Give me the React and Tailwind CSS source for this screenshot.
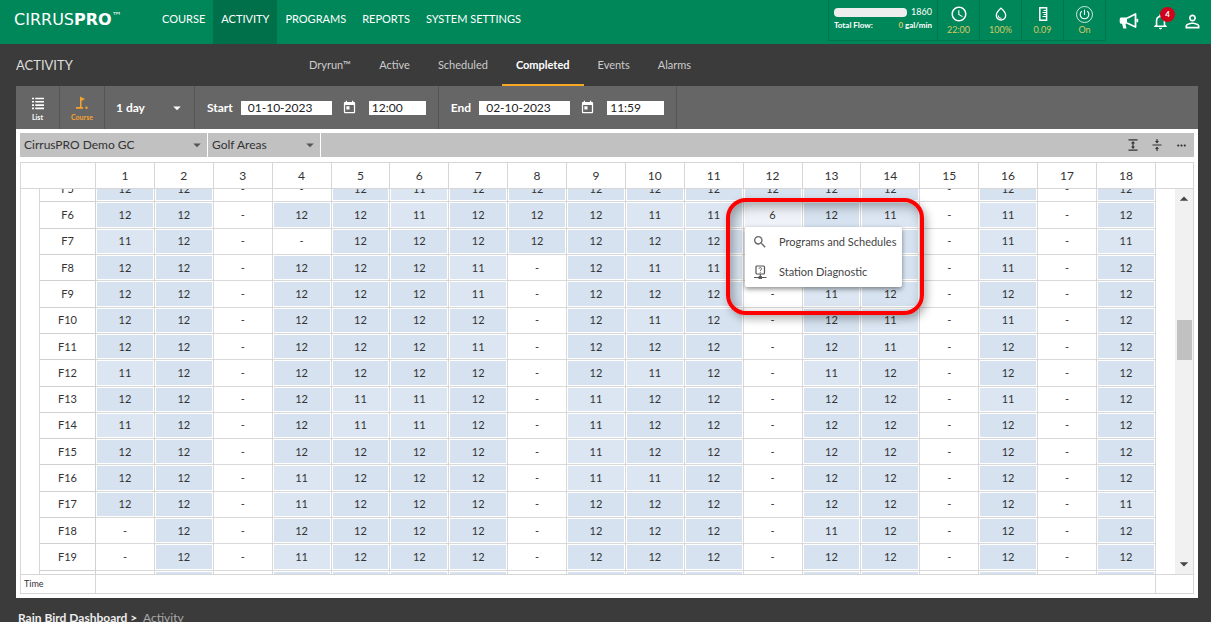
import React, { useState } from 'react';
import {
  MdArrowDropDown,
  MdArrowDropUp,
  MdToday,
  MdAccessTime,
  MdOutlineWaterDrop,
  MdPowerSettingsNew,
  MdNotificationsNone,
  MdPersonOutline,
  MdSearch,
  MdMoreHoriz,
} from 'react-icons/md';

const menu = ['COURSE', 'ACTIVITY', 'PROGRAMS', 'REPORTS', 'SYSTEM SETTINGS'];
const tabs = ['Dryrun™', 'Active', 'Scheduled', 'Completed', 'Events', 'Alarms'];
const holes = Array.from({ length: 18 }, (_, i) => i + 1);

// minutes per hole, one line for each station
// '-' means not watered, '.' is a shaded cell without a number, 'x' an empty one
const stations = [
  { name: 'F5', values: '12 12 - - 12 11 12 12 12 12 12 12 12 12 - 12 - 12' },
  { name: 'F6', values: '12 12 - 12 12 11 12 12 12 11 11 6 12 11 - 11 - 12' },
  { name: 'F7', values: '11 12 - - 12 12 12 12 12 12 12 . . . - 11 - 11' },
  { name: 'F8', values: '12 12 - 12 12 12 11 - 12 11 11 . . . - 11 - 12' },
  { name: 'F9', values: '12 12 - 12 12 12 11 - 12 12 12 - 11 12 - 12 - 12' },
  { name: 'F10', values: '12 12 - 12 12 12 12 - 12 11 12 - 12 11 - 11 - 12' },
  { name: 'F11', values: '12 12 - 12 12 12 11 - 12 12 12 - 12 11 - 12 - 12' },
  { name: 'F12', values: '11 12 - 12 12 12 12 - 12 11 12 - 11 12 - 12 - 12' },
  { name: 'F13', values: '12 12 - 12 11 11 12 - 11 12 12 - 12 12 - 11 - 12' },
  { name: 'F14', values: '11 12 - 12 11 11 12 - 11 12 12 - 12 12 - 12 - 12' },
  { name: 'F15', values: '12 12 - 12 12 12 12 - 11 12 12 - 12 12 - 12 - 12' },
  { name: 'F16', values: '12 12 - 11 12 12 12 - 11 11 12 - 12 12 - 12 - 12' },
  { name: 'F17', values: '12 12 - 11 12 12 12 - 12 12 12 - 12 12 - 12 - 11' },
  { name: 'F18', values: '- 12 - 12 12 12 12 - 12 12 12 - 11 12 - 12 - 12' },
  { name: 'F19', values: '- 12 - 11 12 12 12 - 12 12 12 - 12 12 - 12 - 12' },
  { name: '', values: 'x . x . . . . x . . . x . . x . x .' },
];

const cellColor = (value) => {
  if (value === '-' || value === 'x') return 'bg-white';
  if (value === '6') return 'bg-[#eff3f9]';
  if (value === '11') return 'bg-[#dbe6f2]';
  return 'bg-[#d6e2f0]';
};

function ListIcon() {
  return (
    <svg width="14" height="14" viewBox="0 0 14 14" fill="none" stroke="currentColor" strokeWidth="1.6" aria-hidden="true">
      <path d="M1 2.500h2M1 5.800h2M1 9.100h2M1 12.400h2M4.300 2.500H13M4.300 5.800H13M4.300 9.100H13M4.300 12.400H13" />
    </svg>
  );
}

function CourseIcon() {
  return (
    <svg width="14" height="14" viewBox="0 0 14 14" fill="currentColor" aria-hidden="true">
      <path d="M5 .5l5 2.500-3.500 2V11H8v1.800H1V11h4z" />
      <circle cx="11.500" cy="11.800" r="1.200" />
    </svg>
  );
}

function Ruler() {
  return (
    <svg width="20" height="20" viewBox="0 0 20 20" fill="none" stroke="#fff" aria-hidden="true">
      <rect x="6.800" y="3.800" width="6.800" height="12.400" strokeWidth="1.500" />
      <path d="M10.500 6.500h3M9.500 8.500h4M10.500 10.500h3M9.500 12.500h4" strokeWidth="1" />
    </svg>
  );
}

function Megaphone() {
  return (
    <svg width="20" height="18" viewBox="0 0 20 18" fill="none" aria-hidden="true">
      <path d="M1.800 5.500H8v6.200H6.500l1 4.800H4.300l-1.200-4.800H1.800C.3 11.700.3 5.500 1.800 5.500z" fill="#fff" />
      <path d="M8 6.300L16.500 2v13L8 11" stroke="#fff" strokeWidth="1.800" strokeLinejoin="round" />
      <path d="M18.300 6.800v3.400" stroke="#fff" strokeWidth="1.800" />
    </svg>
  );
}

function Diagnostic() {
  return (
    <svg width="16" height="16" viewBox="0 0 16 16" fill="none" stroke="#555" aria-hidden="true" className="shrink-0">
      <rect x="4" y="2" width="8.500" height="8" rx="1" strokeWidth="1.200" />
      <path d="M7 4.800c0-1.600 2.600-1.600 2.600 0 0 1-1.300 1-1.300 2M8.300 7.800v1" strokeWidth=".9" />
      <path d="M8.300 10v3M2 13.500h12.500" strokeWidth="1.200" />
      <rect x="7" y="12.600" width="2.600" height="2" fill="#555" strokeWidth=".8" />
    </svg>
  );
}

function ExpandRows() {
  return (
    <svg width="12" height="12" viewBox="0 0 12 12" aria-hidden="true">
      <path d="M1.500 .8h9M1.500 11.200h9M6 3v6" stroke="#333" strokeWidth="1.200" />
      <path d="M4 4.600L6 2l2 2.600zM4 7.400L6 10l2-2.600z" fill="#333" />
    </svg>
  );
}

function CollapseRows() {
  return (
    <svg width="12" height="12" viewBox="0 0 12 12" aria-hidden="true">
      <path d="M1.500 6h9M6 0v3M6 9v3" stroke="#333" strokeWidth="1.200" />
      <path d="M4 2l2 2.600L8 2zM4 10l2-2.600L8 10z" fill="#333" />
    </svg>
  );
}

function Status({ icon, value }) {
  return (
    <div className="flex w-[42px] flex-col items-center border-r border-[#007549] pt-1">
      <span className="flex h-5 items-center">{icon}</span>
      <span className="text-[9px] leading-3 text-[#d5c765]">{value}</span>
    </div>
  );
}

function DateField({ label, date, setDate, time, setTime }) {
  return (
    <div className="flex items-center border-r border-[#555] pr-3 pl-3">
      <label className="flex items-center text-xs font-bold text-white">
        <span className="mr-2">{label}</span>
        <input
          value={date}
          onChange={(e) => setDate(e.target.value)}
          className="h-[14px] w-[91px] bg-white pl-[7px] text-xs font-normal text-[#222]"
        />
      </label>
      <button aria-label={`${label} calendar`} className="mr-3 ml-[10px] text-white">
        <MdToday size={15} />
      </button>
      <input
        aria-label={`${label} time`}
        value={time}
        onChange={(e) => setTime(e.target.value)}
        className="h-[14px] w-[57px] bg-white pl-[3px] text-xs text-[#222]"
      />
    </div>
  );
}

function App() {
  const [tab, setTab] = useState('Completed');
  const [startDate, setStartDate] = useState('01-10-2023');
  const [startTime, setStartTime] = useState('12:00');
  const [endDate, setEndDate] = useState('02-10-2023');
  const [endTime, setEndTime] = useState('11:59');

  return (
    <div className="flex h-screen flex-col overflow-hidden bg-[#3b3b3b] font-['Lato',sans-serif]">
      <header className="flex h-11 shrink-0 bg-[#008759] text-white">
        <a
          href="#"
          className="flex w-[154px] items-start pt-[10px] pl-[14px] font-['DejaVu_Sans',sans-serif] text-base leading-5"
        >
          CIRRUS<b>PRO</b>
          <span className="text-[10px] leading-3">™</span>
        </a>
        <nav className="flex">
          {menu.map((item) => (
            <a
              key={item}
              href="#"
              className={`px-2 pt-[11px] text-[11px] leading-4 ${item === 'ACTIVITY' ? 'bg-[#00704a]' : ''}`}
            >
              {item}
            </a>
          ))}
        </nav>
        <div className="ml-auto flex h-[41px] border-b border-l border-[#007549]">
          <div className="w-[109px] border-r border-[#007549] px-[5px] pt-[6px] text-[9px] leading-3">
            <div className="flex items-center justify-between">
              <span className="h-[9px] w-[73px] rounded-sm bg-[#eee]" />
              <span>1860</span>
            </div>
            <div className="mt-px flex justify-between text-[8px] font-bold">
              <span>Total Flow:</span>
              <span>
                <span className="text-[#d5c765]">0</span> gal/min
              </span>
            </div>
          </div>
          <Status icon={<MdAccessTime size={18} />} value="22:00" />
          <Status icon={<MdOutlineWaterDrop size={16} />} value="100%" />
          <Status icon={<Ruler />} value="0.09" />
          <Status
            icon={
              <span className="flex size-[17px] items-center justify-center rounded-full border border-white/80">
                <MdPowerSettingsNew size={13} />
              </span>
            }
            value="On"
          />
        </div>
        <div className="flex h-[42px] items-center gap-3 pr-2 pl-[13px]">
          <button aria-label="News">
            <Megaphone />
          </button>
          <button aria-label="Notifications" className="relative">
            <MdNotificationsNone size={19} />
            <span className="absolute -top-[5px] -right-[5px] flex size-[15px] items-center justify-center rounded-full bg-[#d0021b] text-[8px] font-bold">
              4
            </span>
          </button>
          <button aria-label="Account">
            <MdPersonOutline size={21} />
          </button>
        </div>
      </header>

      <div className="flex h-[42px] shrink-0 pl-4">
        <h1 className="w-[279px] pt-[11px] text-[13px] leading-5 text-[#ddd]">ACTIVITY</h1>
        <div className="flex">
          {tabs.map((item) => (
            <button
              key={item}
              onClick={() => setTab(item)}
              className={`border-b-2 px-[14px] pt-0.5 text-[11px] ${
                tab === item ? 'border-[#f5a623] font-bold text-white' : 'border-transparent text-[#ccc]'
              }`}
            >
              {item}
            </button>
          ))}
        </div>
      </div>

      <div className="mr-[13px] ml-4 flex h-[43px] shrink-0 bg-[#666]">
        <button className="flex w-11 flex-col items-center border-r border-[#555] pt-[10px] text-[7px] leading-[10px] font-bold text-white">
          <ListIcon />
          <span className="mt-0.5">List</span>
        </button>
        <button className="flex w-[45px] flex-col items-center border-r border-[#555] pt-[10px] text-[7px] leading-[10px] font-bold text-[#f5a32b]">
          <CourseIcon />
          <span className="mt-0.5">Course</span>
        </button>
        <div className="flex w-[90px] items-center border-r border-[#555] pr-2 pl-[11px] text-white">
          <select aria-label="Period" className="w-full appearance-none text-xs font-bold">
            <option>1 day</option>
          </select>
          <MdArrowDropDown size={18} className="shrink-0" />
        </div>
        <DateField label="Start" date={startDate} setDate={setStartDate} time={startTime} setTime={setStartTime} />
        <DateField label="End" date={endDate} setDate={setEndDate} time={endTime} setTime={setEndTime} />
      </div>

      <main className="mr-[13px] ml-4 flex min-h-0 flex-1 flex-col bg-white p-1 text-[#333]">
        <div className="flex h-6 shrink-0 bg-[#c1c1c1]">
          <div className="flex w-[188px] items-center border-r border-white pr-px pl-1">
            <select aria-label="Site" className="w-full appearance-none text-xs">
              <option>CirrusPRO Demo GC</option>
            </select>
            <MdArrowDropDown size={18} className="shrink-0 text-[#555]" />
          </div>
          <div className="flex w-[113px] items-center border-r border-white pr-px pl-1">
            <select aria-label="Area" className="w-full appearance-none text-xs">
              <option>Golf Areas</option>
            </select>
            <MdArrowDropDown size={18} className="shrink-0 text-[#555]" />
          </div>
          <div className="ml-auto flex items-center gap-3 pr-[6px]">
            <button aria-label="Expand rows">
              <ExpandRows />
            </button>
            <button aria-label="Collapse rows">
              <CollapseRows />
            </button>
            <button aria-label="More">
              <MdMoreHoriz size={13} />
            </button>
          </div>
        </div>

        <div className="relative mt-[5px] flex min-h-0 flex-1 flex-col border border-[#d6d6d6]">
          <table className="w-full shrink-0 table-fixed border-separate border-spacing-0 text-xs">
            <thead>
              <tr className="h-[26px]">
                <th className="w-[75px] border-r border-b border-[#d6d6d6]" />
                {holes.map((hole) => (
                  <th key={hole} className="border-r border-b border-[#d6d6d6] p-0 font-normal">
                    {hole}
                  </th>
                ))}
                <th className="w-[37px] border-b border-[#d6d6d6]" />
              </tr>
            </thead>
          </table>

          <div className="flex min-h-0 flex-1 overflow-hidden">
            <div className="min-w-0 flex-1">
              <table className="-mt-[13px] h-[421px] w-full table-fixed border-separate border-spacing-0 text-center text-[11px] leading-4">
                <tbody>
                  {stations.map((station) => (
                    <tr key={station.name}>
                      <td className="w-[19px] border-r border-[#d6d6d6] p-0" />
                      <th className="w-14 border-r border-b border-[#d0d0d0] p-0 font-normal">{station.name}</th>
                      {station.values.split(' ').map((value, i) => (
                        <td
                          key={i}
                          className={`border-r border-b border-[#d9d9d9] bg-clip-content p-px ${cellColor(value)}`}
                        >
                          {value === '.' || value === 'x' ? '\u00a0' : value}
                        </td>
                      ))}
                      <td className="w-[19px] p-0" />
                    </tr>
                  ))}
                </tbody>
              </table>
            </div>
            <div className="flex w-[18px] shrink-0 flex-col items-center bg-[#f1f1f1] text-[#444]">
              <MdArrowDropUp size={20} className="shrink-0" />
              <span className="mt-[111px] h-10 w-[15px] shrink-0 bg-[#c1c1c1]" />
              <MdArrowDropDown size={20} className="mt-auto shrink-0" />
            </div>
          </div>

          <div className="flex h-[19px] shrink-0 items-center border-t border-[#d6d6d6] text-[9px]">
            <span className="flex h-full w-[75px] items-center border-r border-[#d6d6d6] pl-[3px]">Time</span>
            <span className="h-full flex-1 border-r border-[#d6d6d6]" />
            <span className="w-[37px]" />
          </div>

          {/* highlight around the open context menu */}
          <div className="absolute top-[35px] left-[705px] h-[117px] w-[198px] rounded-[20px] border-4 border-[#f00] shadow-[3px_4px_8px_rgba(0,0,0,0.3),inset_3px_4px_12px_rgba(0,0,0,0.35)]" />
          <div className="absolute top-[64px] left-[724px] w-[157px] rounded-xs bg-white text-[11px] text-[#444] shadow-[0_2px_5px_rgba(0,0,0,0.45)]">
            <button className="flex h-[30px] w-full items-center gap-[11px] pl-[7px]">
              <MdSearch size={16} className="shrink-0 text-[#666]" />
              Programs and Schedules
            </button>
            <button className="flex h-[30px] w-full items-center gap-[11px] pl-[7px]">
              <Diagnostic />
              Station Diagnostic
            </button>
          </div>
        </div>
      </main>

      <footer className="h-6 shrink-0 pt-3 pl-[18px] text-xs leading-4 text-[#aaa]">
        <a href="#" className="font-bold text-[#eee]">
          Rain Bird Dashboard
        </a>
        <span className="mx-[3px] font-bold text-[#eee]">&gt;</span> Activity
      </footer>
    </div>
  );
}

export default App;
